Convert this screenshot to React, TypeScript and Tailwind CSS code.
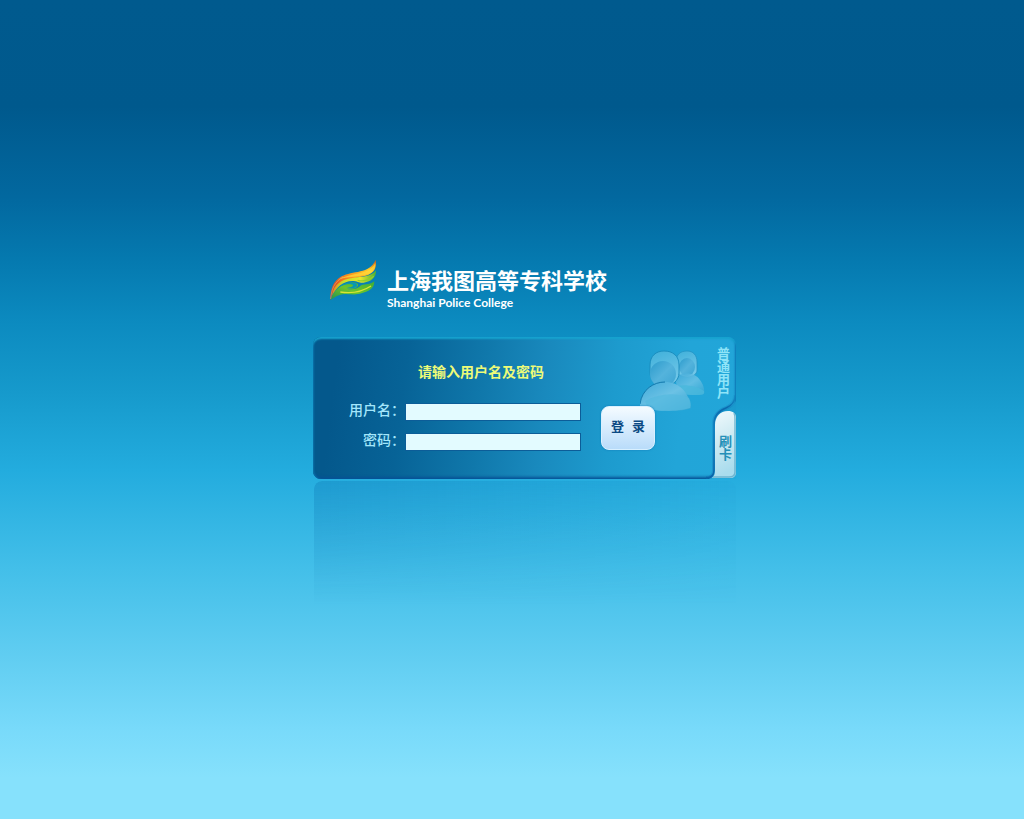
import React, { useState } from "react";

function WingLogo() {
  return (
    <svg viewBox="26 28 144 129" className="h-[43px] w-12 shrink-0" aria-hidden="true">
      <defs>
        <linearGradient id="flame" x1="0" y1="1" x2="1" y2="0">
          <stop offset="0" stopColor="#b8432c" />
          <stop offset="0.3" stopColor="#ee5a1e" />
          <stop offset="0.55" stopColor="#fb9a1e" />
          <stop offset="0.8" stopColor="#ffc92a" />
          <stop offset="1" stopColor="#c8551a" />
        </linearGradient>
        <linearGradient id="leaf" x1="0" y1="0" x2="1" y2="0">
          <stop offset="0" stopColor="#e58a1c" />
          <stop offset="0.25" stopColor="#c5dc2c" />
          <stop offset="0.65" stopColor="#e4e62a" />
          <stop offset="1" stopColor="#4bb035" />
        </linearGradient>
        <linearGradient id="grass" x1="0" y1="1" x2="1" y2="0">
          <stop offset="0" stopColor="#23924a" />
          <stop offset="0.5" stopColor="#6cc42c" />
          <stop offset="1" stopColor="#3fae34" />
        </linearGradient>
      </defs>
      <path
        d="M30 152C30 118 38 94 64 80C96 62 148 74 166 30C170 55 162 70 136 78C100 87 58 88 41 120C36 130 34 141 30 152Z"
        fill="url(#flame)"
      />
      <path d="M58 88C92 68 146 78 165 40C167 58 158 70 134 76C104 82 80 82 58 88Z" fill="#ffdc3a" opacity="0.7" />
      <path
        d="M35 138C40 104 62 90 96 85C126 81 153 82 167 62C168 84 153 96 130 99C118 101 112 94 96 94C68 94 48 114 35 138Z"
        fill="url(#leaf)"
      />
      <path
        d="M30 152C40 124 56 108 82 101C96 97 116 98 113 108C108 118 92 118 78 117C94 121 110 119 119 110C127 101 148 108 162 95C162 119 143 125 123 131C101 139 77 129 58 136C46 140 38 146 30 152Z"
        fill="url(#grass)"
      />
      <path d="M54 114C72 94 108 96 110 105C112 113 98 118 80 114C94 113 101 108 97 105C88 101 70 104 54 114Z" fill="#0797b5" />
      <path d="M112 92C130 96 148 91 160 80" fill="none" stroke="#8fcf30" strokeWidth="4" />
      <path d="M60 127C90 132 118 131 152 109" fill="none" stroke="#d9e432" strokeWidth="4" />
      <path d="M31 148C33 118 42 98 68 82" fill="none" stroke="#c9c79a" strokeWidth="2" opacity="0.7" />
    </svg>
  );
}

function UsersArt() {
  return (
    <svg
      viewBox="0 0 66 62"
      className="pointer-events-none absolute -top-[53px] left-[39px] h-[62px] w-[66px]"
      aria-hidden="true"
    >
      <defs>
        <linearGradient id="head" x1="0" y1="0" x2="0.3" y2="1">
          <stop offset="0" stopColor="#3fb0da" />
          <stop offset="1" stopColor="#72c7e8" />
        </linearGradient>
        <linearGradient id="face" x1="0" y1="0" x2="1" y2="1">
          <stop offset="0" stopColor="#2b9bcc" />
          <stop offset="0.5" stopColor="#54b3dc" />
          <stop offset="1" stopColor="#3ca5d3" />
        </linearGradient>
        <linearGradient id="body" x1="0" y1="0" x2="1" y2="1">
          <stop offset="0" stopColor="#3ea9d8" />
          <stop offset="0.5" stopColor="#6cc2e5" />
          <stop offset="1" stopColor="#2fa5d2" />
        </linearGradient>
      </defs>
      <path d="M36 12C36 4 41 1 47 1C53 1 57 5 57 12V20C57 24 53 27 47 27C41 27 36 24 36 20Z" fill="url(#head)" stroke="#218fc0" strokeWidth="0.7" />
      <ellipse cx="47" cy="17" rx="8" ry="9" fill="url(#face)" />
      <path d="M35 27C42 22 55 22 60 30C63 34 65 39 64 44C55 46 45 45 38 42Z" fill="url(#body)" opacity="0.85" />
      <path d="M36 36C46 34 57 36 64 41C65 45 62 45 55 45C47 45 40 44 37 42Z" fill="#48b8dc" opacity="0.8" />
      <path d="M10 15C10 6 16 1 24 1C33 1 39 6 39 15V23C39 30 33 36 24 36C15 36 10 30 10 22Z" fill="url(#head)" stroke="#198abb" strokeWidth="0.9" />
      <ellipse cx="23" cy="24" rx="13" ry="13" fill="url(#face)" />
      <path d="M0 54C2 39 14 32 25 32C39 32 49 42 51 58C43 62 13 62 0 57Z" fill="url(#body)" />
      <path d="M5 51C19 43 36 42 49 48C51 52 51 55 50 58C40 61 20 62 8 59Z" fill="#55b9df" opacity="0.75" />
      <path d="M0 54C2 39 14 32 25 32" fill="none" stroke="#1279ad" strokeWidth="1" />
    </svg>
  );
}

function TabSkin() {
  return (
    <svg viewBox="0 0 30 84" className="pointer-events-none absolute right-0 bottom-0 h-[84px] w-[30px]" aria-hidden="true">
      <defs>
        <linearGradient id="tabFill" x1="0" y1="0" x2="0.2" y2="1">
          <stop offset="0" stopColor="#f2fafd" />
          <stop offset="0.5" stopColor="#cdeaf2" />
          <stop offset="1" stopColor="#a9dced" />
        </linearGradient>
        <linearGradient id="gap" x1="0" y1="0" x2="0" y2="1">
          <stop offset="0" stopColor="#1797cb" />
          <stop offset="1" stopColor="#25abdc" />
        </linearGradient>
        <linearGradient id="rim" gradientUnits="userSpaceOnUse" x1="0" y1="0" x2="0" y2="84">
          <stop offset="0" stopColor="#0d7cba" stopOpacity="0.3" />
          <stop offset="0.15" stopColor="#0b69ae" />
          <stop offset="0.4" stopColor="#0f7dbd" />
          <stop offset="1" stopColor="#0a63a8" />
        </linearGradient>
      </defs>
      <path d="M31 0C31 8 26 12 20 14C12 16 8 22 8 29V75C8 80 5 84 0 85H31Z" fill="url(#gap)" />
      <path
        d="M29 0C29 7 25 11 20 13C12 16 8 21 8 29V75C8 80 5 83 0 83"
        fill="none"
        stroke="url(#rim)"
        strokeWidth="4"
        opacity="0.3"
      />
      <path
        d="M29 0C29 7 25 11 20 13C12 16 8 21 8 29V75C8 80 5 83 0 83"
        fill="none"
        stroke="url(#rim)"
        strokeWidth="1.5"
      />
      <path d="M9 30C9 22 14 16 22 16C27 16 30 18 30 23V77C30 81 28 83 24 83H6C8 81 9 79 9 76Z" fill="url(#tabFill)" />
      <path d="M28 18C29 20 29 22 29 24V77C29 80 27 82 23 82H7" fill="none" stroke="#5fabc9" strokeWidth="1.5" opacity="0.8" />
    </svg>
  );
}

const fieldClass =
  "h-[18px] w-44 border border-[#0c5d98] bg-[#e3fbff] px-1 text-xs text-[#0b4b80] outline-none focus:border-[#003f73]";
const labelClass = "w-14 text-sm leading-[14px] font-medium text-[#a3e6fb]";

export default function App() {
  const [mode, setMode] = useState("user");
  const [name, setName] = useState("");
  const [password, setPassword] = useState("");

  return (
    <main className="flex min-h-screen flex-col items-center bg-[linear-gradient(to_bottom,#005a8e_0%,#00598d_13%,#02689f_24%,#057ab0_32%,#0c8bc0_39.5%,#169acc_48%,#23acde_57.5%,#43bfe9_69.5%,#60cdf1_80%,#78dafa_89%,#86e1fc_95%,#86e1fc_100%)] pt-[259px] pl-[25px] font-['Liberation_Sans','Noto_Sans_CJK_SC',sans-serif]">
      <div className="flex w-[423px] flex-col">
        <header className="flex h-[78px] gap-2.5 pl-4">
          <WingLogo />
          <div className="flex flex-col pt-2.5 text-white">
            <h1 className="text-[22px] leading-[26px] font-bold">上海我图高等专科学校</h1>
            <p className="font-['Lato',sans-serif] text-xs leading-4 font-bold">Shanghai Police College</p>
          </div>
        </header>

        <section className="relative flex h-[142px] rounded-lg bg-[linear-gradient(97deg,#04588c_6%,#076397_22%,#1078ab_40%,#1989bd_54%,#1d9bce_70%,#22a5d8_86%,#22a6d9_100%)] shadow-[inset_0_3px_2px_-1px_#17a3cf,inset_2px_0_2px_-1px_#0c73a8,inset_0_-3px_3px_-1px_#075195,inset_-2px_0_2px_-1px_#0d7cba]">
          <TabSkin />
          <form className="flex flex-1 flex-col pt-6 pl-9" onSubmit={(e) => e.preventDefault()}>
            <p className="pl-[69px] text-sm leading-[22px] font-bold text-[#edfb78]">请输入用户名及密码</p>
            <div className="flex gap-5 pt-5">
              <div className="flex flex-col gap-3">
                <div className="flex">
                  <label htmlFor="username" className={labelClass}>用户名：</label>
                  <input id="username" value={name} onChange={(e) => setName(e.target.value)} className={fieldClass} />
                </div>
                <div className="flex">
                  <label htmlFor="password" className={labelClass + " pl-3.5"}>密码：</label>
                  <input
                    id="password"
                    type="password"
                    value={password}
                    onChange={(e) => setPassword(e.target.value)}
                    className={fieldClass}
                  />
                </div>
              </div>
              <div className="relative pt-[3px]">
                <UsersArt />
                <button
                  type="submit"
                  className="relative h-11 w-[54px] rounded-lg border border-[#d9f0ff] bg-linear-to-b from-[#f4fbff] to-[#b9dcfa] font-['Liberation_Mono','Noto_Sans_CJK_SC',monospace] text-[13px] font-bold text-[#0b4a84] shadow-[0_0_2px_#1276b5]"
                >
                  登 录
                </button>
              </div>
            </div>
          </form>
          <nav className="relative flex w-7 flex-col items-center justify-between pt-2.5 pb-[18px]">
            <button
              type="button"
              aria-pressed={mode === "user"}
              onClick={() => setMode("user")}
              className="text-[13px] leading-[18px] font-bold text-[#8fe4f8] [writing-mode:vertical-rl]"
            >
              普通用户
            </button>
            <button
              type="button"
              aria-pressed={mode === "card"}
              onClick={() => setMode("card")}
              className="ml-1 text-[13px] leading-[18px] font-bold text-[#2590b8] [writing-mode:vertical-rl]"
            >
              刷卡
            </button>
          </nav>
        </section>

        <div
          aria-hidden="true"
          className="mt-0.5 ml-px h-[124px] rounded-t-lg bg-linear-to-r from-[#0a6fae]/30 to-[#1c9fd3]/10 [mask-image:linear-gradient(to_bottom,black,transparent)]"
        />
      </div>
    </main>
  );
}
